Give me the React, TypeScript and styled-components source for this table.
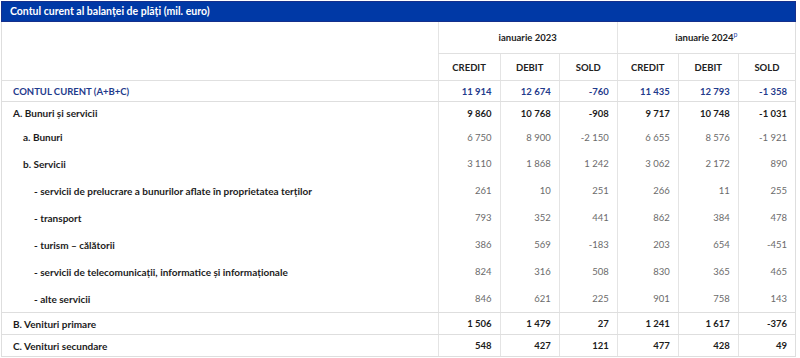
import React from 'react'
import styled, { createGlobalStyle } from 'styled-components'

const GlobalStyle = createGlobalStyle`
  html, body {
    margin: 0;
    padding: 0;
    background: #fff;
  }
  body {
    font-family: Lato, "Open Sans", "Liberation Sans", sans-serif;
  }
`

const Panel = styled.div`
  width: 795px;
  margin: 1px 0 0 1px;
`

const TitleBar = styled.div`
  height: 19px;
  background-color: #0039a6;
  border: 1px solid #15308c;
  color: #fff;
  font-size: 10.5px;
  font-weight: 700;
  line-height: 19px;
  padding-left: 8px;
`

const Table = styled.table`
  width: 100%;
  border-collapse: collapse;
  table-layout: fixed;
  border: 1px solid #dedede;
  border-top: none;
  font-size: 9.5px;
`

const Th = styled.th<{ $h?: number }>`
  height: ${(p) => p.$h ?? 26}px;
  padding: 0;
  font-weight: 700;
  color: #222;
  text-align: center;
  border-left: 1px solid #e4e4e4;
  border-bottom: 1px solid #e0e0e0;
  &:first-child {
    border-left: none;
  }
`

const SubHead = styled(Th)`
  &:first-child {
    border-left: 1px solid #e4e4e4;
  }
`

const Sup = styled.sup`
  color: #1f47a8;
  font-size: 7px;
  font-weight: 400;
  line-height: 0;
`

type Kind = 'total' | 'main' | 'sub'

const Row = styled.tr<{ $line?: boolean }>`
  & > td {
    border-bottom: ${(p) => (p.$line ? '1px solid #dedede' : 'none')};
  }
`

const Label = styled.td<{ $kind: Kind; $indent: number; $h: number }>`
  height: ${(p) => p.$h}px;
  padding: 0 0 0 ${(p) => p.$indent}px;
  font-size: ${(p) => (p.$kind === 'total' ? '9.5px' : '10px')};
  font-weight: 700;
  color: ${(p) => (p.$kind === 'total' ? '#1f3b8c' : '#1c1c1c')};
  white-space: nowrap;
`

const Num = styled.td<{ $kind: Kind }>`
  padding: 0 8px 0 0;
  text-align: right;
  border-left: 1px solid #e4e4e4;
  font-weight: ${(p) => (p.$kind === 'sub' ? 400 : 700)};
  color: ${(p) =>
    p.$kind === 'total' ? '#1f3b8c' : p.$kind === 'sub' ? '#6b6b6b' : '#1c1c1c'};
`

interface Line {
  label: string
  kind: Kind
  indent: number
  h: number
  line?: boolean
  values: string[]
}

const rows: Line[] = [
  { label: 'CONTUL CURENT (A+B+C)', kind: 'total', indent: 11, h: 20, line: true, values: ['11 914', '12 674', '-760', '11 435', '12 793', '-1 358'] },
  { label: 'A. Bunuri și servicii', kind: 'main', indent: 11, h: 22, values: ['9 860', '10 768', '-908', '9 717', '10 748', '-1 031'] },
  { label: 'a. Bunuri', kind: 'sub', indent: 21, h: 26, values: ['6 750', '8 900', '-2 150', '6 655', '8 576', '-1 921'] },
  { label: 'b. Servicii', kind: 'sub', indent: 21, h: 27, values: ['3 110', '1 868', '1 242', '3 062', '2 172', '890'] },
  { label: '- servicii de prelucrare a bunurilor aflate în proprietatea terților', kind: 'sub', indent: 32, h: 27, values: ['261', '10', '251', '266', '11', '255'] },
  { label: '- transport', kind: 'sub', indent: 32, h: 27, values: ['793', '352', '441', '862', '384', '478'] },
  { label: '- turism – călătorii', kind: 'sub', indent: 32, h: 27, values: ['386', '569', '-183', '203', '654', '-451'] },
  { label: '- servicii de telecomunicații, informatice și informaționale', kind: 'sub', indent: 32, h: 27, values: ['824', '316', '508', '830', '365', '465'] },
  { label: '- alte servicii', kind: 'sub', indent: 32, h: 27, line: true, values: ['846', '621', '225', '901', '758', '143'] },
  { label: 'B. Venituri primare', kind: 'main', indent: 11, h: 21, line: true, values: ['1 506', '1 479', '27', '1 241', '1 617', '-376'] },
  { label: 'C. Venituri secundare', kind: 'main', indent: 11, h: 21, line: true, values: ['548', '427', '121', '477', '428', '49'] }
]

const widths = [436, 62, 59, 58, 61, 60, 57]
const subHeads = ['CREDIT', 'DEBIT', 'SOLD', 'CREDIT', 'DEBIT', 'SOLD']

export default function App (): JSX.Element {
  return (
    <>
      <GlobalStyle />
      <Panel>
        <TitleBar>Contul curent al balanței de plăți (mil. euro)</TitleBar>
        <Table>
          <colgroup>
            {widths.map((w, i) => <col key={i} style={{ width: w }} />)}
          </colgroup>
          <thead>
            <tr>
              <Th rowSpan={2} />
              <Th colSpan={3} $h={31}>ianuarie 2023</Th>
              <Th colSpan={3} $h={31}>ianuarie 2024<Sup>p</Sup></Th>
            </tr>
            <tr>
              {subHeads.map((h, i) => (
                <SubHead key={i} $h={26}>{h}</SubHead>
              ))}
            </tr>
          </thead>
          <tbody>
            {rows.map((r) => (
              <Row key={r.label} $line={r.line}>
                <Label $kind={r.kind} $indent={r.indent} $h={r.h}>{r.label}</Label>
                {r.values.map((v, i) => (
                  <Num key={i} $kind={r.kind}>{v}</Num>
                ))}
              </Row>
            ))}
          </tbody>
        </Table>
      </Panel>
    </>
  )
}
